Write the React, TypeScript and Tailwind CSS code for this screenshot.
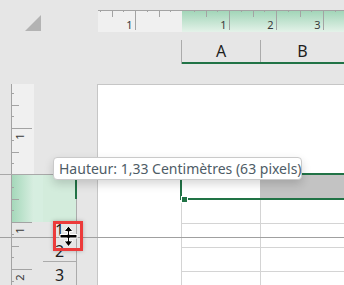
import React from "react";

const GREEN = "#217346";
const TICK = "#a3a3a3";

function HRuler() {
  const W = 246;
  const origin = 84;
  const items: React.ReactNode[] = [];
  for (let k = -7; k <= 14; k++) {
    if (k === 0) continue;
    const x = Math.round(origin + k * 11.75) + 0.5;
    if (x > W) break;
    const m = Math.abs(k) % 4;
    const len = m === 0 ? 20 : m === 2 ? 7 : 2;
    items.push(<line key={"t" + k} x1={x} x2={x} y1={0} y2={len} stroke={TICK} strokeWidth={1} />);
    if (m === 0) {
      items.push(
        <text key={"l" + k} x={x - 3} y={19} textAnchor="end" fontSize={11} fill="#3a3a3a" fontFamily="Noto Sans, sans-serif">
          {Math.abs(k) / 4}
        </text>
      );
    }
  }
  return (
    <svg width={W} height={22} className="block shrink-0">
      <defs>
        <linearGradient id="hg" x1="0" y1="0" x2="0" y2="1">
          <stop offset="0" stopColor="#9fd4b6" />
          <stop offset="1" stopColor="#e4f2e9" />
        </linearGradient>
      </defs>
      <rect x={0} y={0} width={origin} height={22} fill="#f0f0f0" />
      <rect x={origin} y={0} width={W - origin} height={22} fill="url(#hg)" />
      <line x1={0} x2={W} y1={0.5} y2={0.5} stroke={TICK} />
      {items}
    </svg>
  );
}

function VRulerPart({ top, height, green }: { top: number; height: number; green?: boolean }) {
  const origin = 175;
  const items: React.ReactNode[] = [];
  for (let k = -9; k <= 12; k++) {
    if (k === 0) continue;
    const gy = Math.round(origin + k * 11.75);
    const y = gy - top + 0.5;
    if (y < 0 || y > height) continue;
    const m = Math.abs(k) % 4;
    const len = m === 0 ? 20 : m === 2 ? 7 : 2;
    items.push(<line key={"t" + k} x1={0} x2={len} y1={y} y2={y} stroke={TICK} />);
    if (m === 0) {
      items.push(
        <text
          key={"l" + k}
          transform={`translate(${7} ${y + 5}) rotate(-90)`}
          textAnchor="end"
          dominantBaseline="central"
          fontSize={11}
          fill="#3a3a3a"
          fontFamily="Noto Sans, sans-serif"
        >
          {Math.abs(k) / 4}
        </text>
      );
    }
  }
  return (
    <svg width={22} height={height} className="block">
      <defs>
        <linearGradient id="vg" x1="0" y1="0" x2="1" y2="0">
          <stop offset="0" stopColor="#a5d8ba" />
          <stop offset="1" stopColor="#d8eee1" />
        </linearGradient>
      </defs>
      {green ? <rect x={0} y={0} width={22} height={47} fill="url(#vg)" /> : <rect x={0} y={0} width={22} height={height} fill="#f0f0f0" />}
      {items}
    </svg>
  );
}

function ResizeCursor() {
  return (
    <svg width={21} height={23} viewBox="0 0 21 23" className="block">
      <path
        d="M10.5 1 L15 6.5 L11.5 6.5 L11.5 9.5 L19 9.5 L19 13 L11.5 13 L11.5 16 L15 16 L10.5 21.5 L6 16 L9.5 16 L9.5 13 L2 13 L2 9.5 L9.5 9.5 L9.5 6.5 L6 6.5 Z"
        fill="#000"
        stroke="#fff"
        strokeWidth={1}
        strokeLinejoin="miter"
      />
    </svg>
  );
}

export default function App() {
  return (
    <div className="relative w-[344px] h-[285px] overflow-hidden bg-[#e6e6e6] flex flex-col font-['Noto_Sans',sans-serif]">
      {/* top band */}
      <div className="flex h-[84px] shrink-0">
        <div className="w-[98px] shrink-0 pl-[25px] pt-[15px]">
          <svg width="16" height="16" className="block">
            <polygon points="0,16 16,0 16,16" fill="#b3b3b3" />
          </svg>
        </div>
        <div className="flex-1 flex flex-col pt-[10px] min-w-0">
          <HRuler />
          <div className="h-[8px] shrink-0" />
          <div className="flex h-[22px] shrink-0">
            <div className="w-[83px] shrink-0" />
            <div className="w-[79px] shrink-0 border-l border-[#ababab] flex items-center justify-center text-[16px] text-[#1e1e1e] leading-none">
              A
            </div>
            <div className="flex-1 border-l border-[#ababab] flex items-center justify-center text-[16px] text-[#1e1e1e] leading-none">
              B
            </div>
          </div>
          <div className="flex h-[2px] shrink-0">
            <div className="w-[83px] shrink-0" />
            <div className="w-px shrink-0 bg-[#ababab]" />
            <div className="flex-1 bg-[#217346]" />
          </div>
        </div>
      </div>

      {/* bottom band */}
      <div className="flex flex-1 min-h-0">
        {/* left: vertical ruler and row headers */}
        <div className="w-[97px] shrink-0 flex flex-col">
          <div className="h-[90px] shrink-0 flex">
            <div className="w-[11px] shrink-0" />
            <div className="w-[23px] shrink-0 border-l border-[#a3a3a3]">
              <VRulerPart top={84} height={90} />
            </div>
          </div>
          <div className="h-px shrink-0 bg-[#a8a8a8]" />
          <div className="flex-1 flex min-h-0">
            <div className="w-[11px] shrink-0" />
            <div className="w-[23px] shrink-0 border-l border-[#a3a3a3]">
              <VRulerPart top={175} height={110} green />
            </div>
            <div className="w-[9px] shrink-0 flex flex-col">
              <div className="h-[47px] bg-[#d6eee0]" />
            </div>
            <div className="relative w-[33px] shrink-0 flex flex-col text-[16px] text-[#1e1e1e]">
              <div className="h-[62px] shrink-0 flex flex-col">
                <div className="h-[47px] shrink-0 bg-[#d3ecdc]" />
                <div className="flex-1 flex items-end justify-center leading-[16px]">1</div>
              </div>
              <div className="h-px shrink-0 bg-[#ababab]" />
              <div className="h-[23px] shrink-0 flex items-end justify-center leading-[16px] pb-[2px]">2</div>
              <div className="h-px shrink-0 bg-[#ababab]" />
              <div className="h-[23px] shrink-0 flex items-end justify-center leading-[16px] pb-[2px]">3</div>
            </div>
            <div className="relative w-px shrink-0 bg-[#ababab]">
              <div className="absolute left-[-1px] top-0 w-[2px] h-[24px] bg-[#217346]" />
            </div>
          </div>
        </div>

        {/* page */}
        <div className="flex-1 border-l border-t border-[#c6c6c6] bg-white flex flex-col min-w-0">
          <div className="h-[88px] shrink-0" />
          <div className="flex h-[27px] shrink-0">
            <div className="w-[82px] shrink-0" />
            <div className="relative flex-1 flex border-t-2 border-b-2 border-l-2 border-[#217346]">
              <div className="w-[78px] shrink-0 bg-white" />
              <div className="flex-1 bg-[#c3c3c3]" />
              <div className="absolute left-[-1px] top-[21px] w-[7px] h-[7px] bg-white p-px">
                <div className="w-[5px] h-[5px] bg-[#217346]" />
              </div>
            </div>
          </div>
          {[0, 1, 2, 3].map((i) => (
            <div key={i} className="flex h-[24px] shrink-0">
              <div className="w-[83px] shrink-0" />
              <div className="w-[79px] shrink-0 border-l border-b border-[#d4d4d4]" />
              <div className="flex-1 border-l border-b border-[#d4d4d4]" />
            </div>
          ))}
        </div>
      </div>

      {/* drag guide line */}
      <div className="absolute left-0 right-0 top-[237px] h-px bg-[#a0a0a0]" />

      {/* tooltip */}
      <div className="absolute left-[53px] top-[157px] w-[249px] h-[23px] rounded-[4px] border border-[#cacaca] bg-white shadow-[0_4px_10px_rgba(0,0,0,0.16)] flex items-center pl-[5px] text-[14px] leading-none text-[#4e5c66] whitespace-nowrap">
        Hauteur: 1,33 Centimètres (63 pixels)
      </div>

      {/* cursor highlight */}
      <div className="absolute left-[53px] top-[221px] w-[30px] h-[30px] border-[3px] border-[#ec3b3b] shadow-[0_0_4px_rgba(0,0,0,0.25)] flex items-center justify-center">
        <ResizeCursor />
      </div>
    </div>
  );
}
